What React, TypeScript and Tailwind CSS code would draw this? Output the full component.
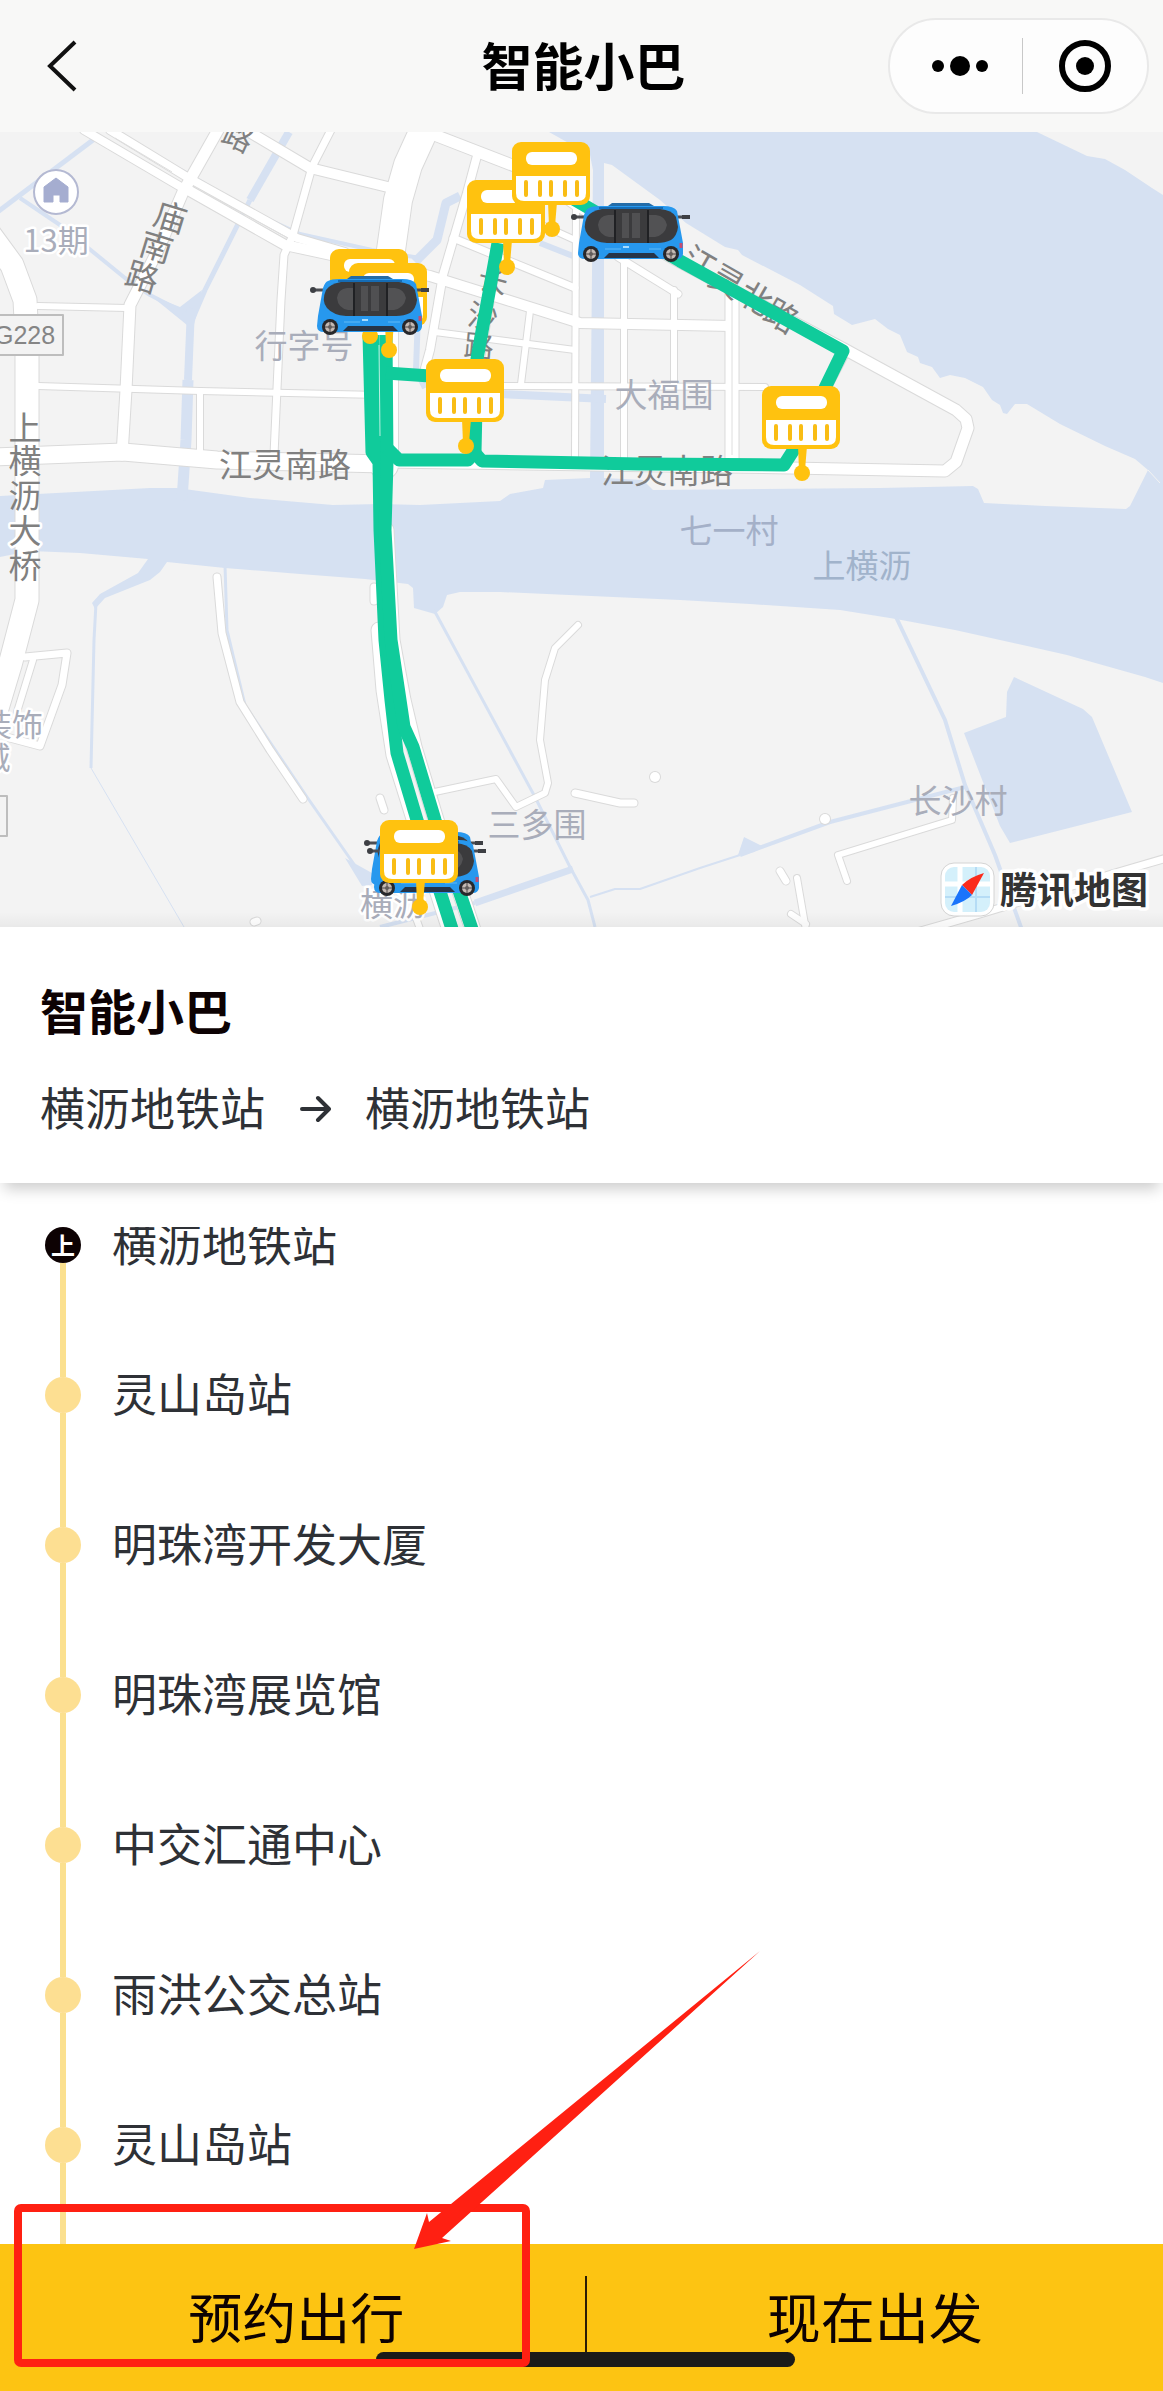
import React, { useState } from "react";

type Road = { d: string; w: number };
type Label = {
	text: string;
	x: number;
	y: number;
	size?: number;
	rotate?: number;
	fill?: string;
	halo?: boolean;
};

const ROAD_TEXT = "#808080";
const PLACE_TEXT = "#a9adba";

const stations = [
	"横沥地铁站",
	"灵山岛站",
	"明珠湾开发大厦",
	"明珠湾展览馆",
	"中交汇通中心",
	"雨洪公交总站",
	"灵山岛站",
];

const creeks: Road[] = [
	{ d: "M-5 214L93 140", w: 5 },
	{ d: "M20 198L60 225L125 278L150 295L187 314", w: 4 },
	{ d: "M289 132L250 200", w: 8 },
	{ d: "M250 200L205 290L193 318", w: 5 },
	{ d: "M191 308L188 380", w: 8 },
	{ d: "M188 380L186 440L182 500", w: 11 },
	{ d: "M120 137L190 175L250 211L300 234L372 250L420 258", w: 4 },
	{ d: "M460 196L446 203L437 240L415 262", w: 9 },
	{ d: "M419 285L416 370L425 388", w: 6 },
	{ d: "M500 394L606 399", w: 8 },
	{ d: "M540 243L578 258", w: 6 },
	{ d: "M96 603L94 640L91 768", w: 3 },
	{ d: "M91 768L184 927", w: 1 },
	{ d: "M225 565L227 630L245 705L307 797L365 880", w: 3 },
	{ d: "M434 610L535 797L570 867L588 900L595 927", w: 3 },
	{ d: "M590 897L615 889L640 889L700 868L740 855", w: 2 },
	{ d: "M740 855L830 822L965 787", w: 4 },
	{ d: "M475 903L573 869", w: 7 },
	{ d: "M380 927L475 903", w: 4 },
	{ d: "M896 617L945 720L965 785L995 855L1022 930", w: 4 },
];

const roads: Road[] = [
	{ d: "M110 130L187 177L297 238L345 252", w: 8 },
	{ d: "M84 130L181 187", w: 8 },
	{ d: "M188 190L285 245L345 258L430 276L507 300L580 323L732 326", w: 10 },
	{ d: "M218 130L183 192L158 250L130 305L126 390L122 455", w: 11 },
	{ d: "M246 130L310 168L400 190", w: 10 },
	{ d: "M331 130L312 167L293 235L284 255L281 300L274 455", w: 7 },
	{ d: "M-10 235L12 265L25 300L27 340L27 600L10 665L-8 725", w: 23 },
	{ d: "M38 306L127 308", w: 6 },
	{ d: "M38 386L200 391L380 395", w: 6 },
	{ d: "M200 391L200 455", w: 6 },
	{ d: "M-5 457L123 452L217 460L385 464", w: 17 },
	{ d: "M385 462L790 468L945 471L956 462L968 428L966 419L956 410L846 350L680 262L578 206L530 172L432 134", w: 11 },
	{ d: "M846 350L822 396", w: 9 },
	{ d: "M424 130L408 165L398 200L391 250L384 330L384 465", w: 28 },
	{ d: "M478 152L467 193L443 275L430 350L424 372", w: 8 },
	{ d: "M453 238L575 288", w: 7 },
	{ d: "M520 215L575 240", w: 6 },
	{ d: "M576 205L575 458", w: 6 },
	{ d: "M624 258L624 458", w: 6 },
	{ d: "M618 257L678 294", w: 7 },
	{ d: "M674 290L674 386", w: 6 },
	{ d: "M500 386L765 387", w: 6 },
	{ d: "M435 332L575 350", w: 6 },
	{ d: "M530 311L521 384", w: 6 },
	{ d: "M495 270L478 370", w: 8 },
	{ d: "M732 292L732 460", w: 13 },
	{ d: "M25 657L67 653L62 685L40 746L10 738", w: 7 },
	{ d: "M33 660L17 712", w: 6 },
	{ d: "M217 577L222 633L240 702L270 750L303 799", w: 7 },
	{ d: "M430 793L496 779L516 807L545 793L548 783L540 740L545 680L555 648L578 625", w: 6 },
	{ d: "M575 793L620 803L634 803", w: 7 },
	{ d: "M655 777L655 777", w: 10 },
	{ d: "M380 798L384 810", w: 7 },
	{ d: "M374 587L374 601", w: 7 },
	{ d: "M254 922L257 921", w: 7 },
	{ d: "M379 630L384 690L394 755L415 822L450 930", w: 15 },
	{ d: "M386 530L392 640L403 700L414 747L436 820L473 930", w: 15 },
	{ d: "M416 918L424 940", w: 6 },
	{ d: "M847 881L838 855L952 820L953 798", w: 6 },
	{ d: "M825 819L825 819", w: 10 },
	{ d: "M780 871L786 881", w: 7 },
	{ d: "M797 878L806 930", w: 6 },
	{ d: "M791 914L806 924", w: 6 },
	{ d: "M910 934L980 914L1115 873L1170 857", w: 7 },
];

const routes = [
	"M369 335L372 452L379 462L380 530L385 640L391 700L397 753L417 820L453 932",
	"M373 335L375 452L385 462",
	"M386 335L387 462L385 530L391 640L400 700L404 727L413 747L435 820L473 932",
	"M386 373L430 376",
	"M387 448L399 460L468 460L475 452L477 359L498 243",
	"M474 452L482 461L640 464L784 465L800 440",
	"M824 390L843 351L680 261L551 186",
];

const labels: Label[] = [
	{ text: "13期", x: 56, y: 252, size: 31, fill: PLACE_TEXT, halo: true },
	{ text: "路", x: 238, y: 148, size: 30, rotate: 25 },
	{ text: "庙", x: 170, y: 229, size: 33, rotate: 17 },
	{ text: "南", x: 156, y: 259, size: 33, rotate: 17 },
	{ text: "路", x: 142, y: 289, size: 33, rotate: 17 },
	{ text: "上", x: 25, y: 440, size: 33 },
	{ text: "横", x: 25, y: 473, size: 33 },
	{ text: "沥", x: 25, y: 508, size: 33 },
	{ text: "大", x: 25, y: 543, size: 33, halo: true },
	{ text: "桥", x: 25, y: 578, size: 33 },
	{ text: "行字号", x: 304, y: 358, fill: PLACE_TEXT },
	{ text: "江灵南路", x: 285, y: 477 },
	{ text: "江灵南路", x: 667, y: 483 },
	{ text: "长", x: 493, y: 291, size: 30, rotate: 15 },
	{ text: "沙", x: 483, y: 327, size: 30, rotate: 10 },
	{ text: "路", x: 479, y: 357, size: 30, rotate: 5 },
	{ text: "江", x: 699, y: 275, size: 33, rotate: 30 },
	{ text: "灵", x: 726, y: 293, size: 33, rotate: 30 },
	{ text: "北", x: 755, y: 310, size: 33, rotate: 30 },
	{ text: "路", x: 781, y: 328, size: 33, rotate: 30 },
	{ text: "大福围", x: 664, y: 407, fill: PLACE_TEXT },
	{ text: "七一村", x: 729, y: 543, fill: "#a4b0c8" },
	{ text: "上横沥", x: 862, y: 578, fill: "#a1b3cb" },
	{ text: "三多围", x: 537, y: 837, fill: PLACE_TEXT },
	{ text: "长沙村", x: 958, y: 813, fill: PLACE_TEXT },
	{ text: "横沥", x: 393, y: 916, fill: PLACE_TEXT, halo: true },
	{ text: "装饰", x: 12, y: 736, size: 31, fill: PLACE_TEXT, halo: true },
	{ text: "城", x: -5, y: 769, size: 31, fill: PLACE_TEXT, halo: true },
];

const StopSign: React.FC<{ x: number; y: number }> = ({ x, y }) => (
	<g transform={`translate(${x} ${y})`}>
		<path d="M36 60H45L43 84H37Z" fill="#ffc20f" />
		<circle cx="40" cy="87" r="8" fill="#ffc20f" />
		<rect width="78" height="63" rx="9" fill="#ffc20f" />
		<rect x="14" y="10" width="51" height="13" rx="6" fill="#fff" />
		<path d="M4 34H74V51Q74 59 66 59H12Q4 59 4 51Z" fill="#fff" />
		<path
			d="M14 40V53M28 40V53M39 40V53M53 40V53M65 40V53"
			stroke="#f9bd14"
			strokeWidth="4"
			strokeLinecap="round"
		/>
	</g>
);

const Bus: React.FC<{ x: number; y: number }> = ({ x, y }) => (
	<g transform={`translate(${x} ${y})`}>
		<path d="M3 14H16M104 14H118" stroke="#4b4d52" strokeWidth="3" />
		<circle cx="3" cy="14" r="3" fill="#3d3f44" />
		<path d="M111 14H119" stroke="#3d3f44" strokeWidth="4" />
		<path d="M18 5Q21 3 30 3H92Q103 3 106 8L112 40L112 51Q111 56 106 56H14Q7 56 7 50L8 40L13 12Q15 6 18 5Z" fill="#2798ee" />
		<path d="M37 3L41 0H78L83 3Z" fill="#236ca8" />
		<path d="M28 5H92" stroke="#156cb5" strokeWidth="2" />
		<path d="M16 14Q20 8 31 6H89Q101 7 105 14L107 24Q106 33 100 37Q94 40 86 40H36Q23 39 17 32Q11 25 16 14Z" fill="#3b3b3d" />
		<path d="M44 12V34H38Q28 32 27 22Q28 13 37 12ZM78 12V34H84Q94 32 96 22Q94 13 85 12Z" fill="#525254" />
		<path d="M51 10H58V35H51ZM61 10H69V35H61Z" fill="#505052" />
		<path d="M44 7V40M77 7V40" stroke="#202124" strokeWidth="2" />
		<path d="M34 46H50M78 46H90" stroke="#60baf8" strokeWidth="1" />
		<path d="M52 44H58" stroke="#a7dcff" strokeWidth="2" />
		<path d="M33 55L38 50H83L88 55Z" fill="#263448" />
		<path d="M110 40V45" stroke="#c44d72" strokeWidth="3" />
		{[20, 100].map((cx) => (
			<g key={cx}>
				<circle cx={cx} cy="51" r="8" fill="#28282b" />
				<circle cx={cx} cy="51" r="5" fill="#c3b9b3" />
				<path d={`M${cx - 5} 51H${cx + 5}M${cx} 46V56`} stroke="#4c4746" strokeWidth="1" />
				<circle cx={cx} cy="51" r="2" fill="#635d5b" />
			</g>
		))}
	</g>
);

const RouteMap: React.FC = () => (
	<svg
		className="block w-full shrink-0"
		viewBox="0 132 1163 795"
		role="img"
		aria-label="地图"
		fontFamily="'Noto Sans CJK SC', sans-serif"
		strokeLinejoin="round"
	>
		<defs>
			<linearGradient id="edge" x1="0" y1="0" x2="0" y2="1">
				<stop offset="0" stopColor="#000" stopOpacity="0" />
				<stop offset="1" stopColor="#000" stopOpacity="0.04" />
			</linearGradient>
		</defs>
		<rect y="132" width="1163" height="795" fill="#f3f3f3" />

		{/* rivers and ponds */}
		<g fill="#d6e1f2">
			<path d="M549 132H1037L1087 156L1105 159L1125 170L1152 188L1163 195V683L1145 677L1067 655L955 630L896 619L840 610L750 604L680 600L500 592H460L447 595L443 607L435 614L414 608L413 588L408 584L365 579L300 574L225 568L167 562L160 572L150 580L105 598L95 609L92 603L100 594L138 573L148 559L80 553L30 551L0 557V496L150 488H177L250 498L333 505L380 504L420 505L500 501L510 494L543 488L545 480L590 478L593 170L590 155Z" />
			<path d="M1014 677L1083 709L1092 717L1132 812L1010 843L1000 826L964 733L1006 717L1007 692Z" />
			<path d="M150 295L180 307L202 290L198 310L191 335L187 325Z" />
			<path d="M345 858L372 873V885L362 886Z" />
			<path d="M738 855L744 837L762 846L754 852Z" />
		</g>
		<path
			d="M604 478V163L612 165L660 200L686 223L725 247L738 250L742 255L800 285L833 306L834 314L852 325L875 319L888 329L900 335L907 352L918 357L920 363L932 367L940 378L950 375L965 378L983 387L992 400L1000 405L1003 413L1007 414L1015 404H1027L1060 424L1105 446L1135 459L1148 470L1130 506L1126 509L1045 506L984 503L978 489L973 486L880 488L653 490L643 480Z"
			fill="#f3f3f3"
		/>
		<path d="M1148 470L1160 483" stroke="#f3f3f3" strokeWidth="1" />
		<path d="M1163 174L1153 188" stroke="#f3f3f3" strokeWidth="3" />

		<g fill="none" stroke="#d6e1f2">
			{creeks.map(({ d, w }) => (
				<path key={d} d={d} strokeWidth={w} />
			))}
		</g>
		<g fill="none" stroke="#dadada" strokeLinecap="round">
			{roads.map(({ d, w }) => (
				<path key={d} d={d} strokeWidth={w + 2} />
			))}
		</g>
		<g fill="none" stroke="#fff" strokeLinecap="round">
			{roads.map(({ d, w }) => (
				<path key={d} d={d} strokeWidth={w} />
			))}
		</g>
		<path d="M115 138L172 172M203 192L288 238M732 298V455" stroke="#dedede" strokeWidth="1" />

		{/* road number shields */}
		<rect x="-10" y="315" width="73" height="40" fill="#f3f3f3" stroke="#bdbdbd" strokeWidth="2" />
		<text x="-6" y="344" fontSize="25" fill="#858585" fontFamily="'Liberation Sans', sans-serif">
			G228
		</text>
		<rect x="-10" y="796" width="17" height="40" fill="#f3f3f3" stroke="#bdbdbd" strokeWidth="2" />

		<circle cx="56" cy="192" r="22" fill="#fff" stroke="#b4b9d2" strokeWidth="2" />
		<path d="M44 187L56 178L68 187V202H60V195H53V202H44Z" fill="#a5add0" stroke="#a5add0" />

		{labels.map(({ text, x, y, size = 33, rotate = 0, fill = ROAD_TEXT, halo }) => (
			<text
				key={`${text}-${x}-${y}`}
				x={x}
				y={y}
				fontSize={size}
				fill={fill}
				textAnchor="middle"
				transform={`rotate(${rotate} ${x} ${y - 11})`}
				stroke={halo ? "#fff" : "none"}
				strokeWidth={halo ? 5 : 0}
				paintOrder="stroke"
			>
				{text}
			</text>
		))}

		<g fill="none" stroke="#10cb9b" strokeWidth="13">
			{routes.map((d) => (
				<path key={d} d={d} />
			))}
		</g>
		<path d="M379 345L380 436" stroke="#b9f0e1" strokeWidth="1" />

		<StopSign x={330} y={249} />
		<StopSign x={349} y={263} />
		<StopSign x={467} y={180} />
		<StopSign x={512} y={142} />
		<StopSign x={426} y={359} />
		<StopSign x={762} y={386} />
		<Bus x={310} y={276} />
		<Bus x={571} y={203} />
		<Bus x={364} y={829} />
		<Bus x={367} y={837} />
		<StopSign x={380} y={820} />

		{/* map provider mark */}
		<rect x="941" y="863" width="53" height="53" rx="13" fill="#fff" stroke="#d4d4d4" />
		<rect x="945" y="867" width="45" height="45" rx="9" fill="#d4f0fb" />
		<path d="M960 867V912M945 884H990" stroke="#fff" strokeWidth="5" />
		<path d="M976 867V912M945 897H990" stroke="#b5dcf5" strokeWidth="2" />
		<path d="M984 873L972 895L962 885Q970 877 984 873Z" fill="#fb2b1c" />
		<path d="M951 906L962 885L972 895Q965 902 951 906Z" fill="#1a74fb" />
		<text
			x="1000"
			y="904"
			fontSize="37"
			fontWeight="700"
			fill="#333"
			stroke="#fff"
			strokeWidth="7"
			paintOrder="stroke"
		>
			腾讯地图
		</text>
		<rect y="912" width="1163" height="15" fill="url(#edge)" />
	</svg>
);

const Header: React.FC = () => (
	<header className="grid h-[132px] shrink-0 grid-cols-[1fr_auto_1fr] items-center bg-[#f8f8f7] px-[14px]">
		<button type="button" aria-label="返回" className="ml-6 w-12">
			<svg viewBox="0 0 48 56" className="w-12" fill="none" stroke="#111" strokeWidth="4">
				<path d="M37 4L12 28L37 52" />
			</svg>
		</button>
		<h1 className="pb-1 pl-1 text-[51px] leading-[60px] font-bold text-black">智能小巴</h1>
		<div className="flex h-24 w-[261px] items-center justify-self-end rounded-full border-2 border-[#e9e9e9] bg-[#fdfdfd]">
			<button type="button" aria-label="更多" className="flex flex-1 items-center justify-center gap-[6px] pl-2">
				<span className="size-3 rounded-full bg-black" />
				<span className="size-5 rounded-full bg-black" />
				<span className="size-3 rounded-full bg-black" />
			</button>
			<span className="h-14 w-px bg-[#c8c8c8]" />
			<button type="button" aria-label="关闭" className="flex flex-1 items-center justify-center">
				<span className="flex size-[52px] items-center justify-center rounded-full border-[6px] border-black">
					<span className="size-[18px] rounded-full bg-black" />
				</span>
			</button>
		</div>
	</header>
);

const App: React.FC = () => {
	const [mode, setMode] = useState("book");

	return (
		<main className="flex h-screen flex-col bg-white font-['Noto_Sans_CJK_SC',sans-serif] text-[#2e3136]">
			<Header />
			<RouteMap />

			<section className="flex shrink-0 flex-col gap-10 bg-white px-10 pt-[52px] pb-12 shadow-[0_10px_14px_-4px_rgba(0,0,0,0.2)]">
				<h2 className="text-[48px] leading-[60px] font-bold text-[#0d0203]">智能小巴</h2>
				<div className="flex items-center text-[45px] leading-[56px]">
					<span>横沥地铁站</span>
					<svg viewBox="0 0 32 32" className="mx-[34px] w-8" fill="none" stroke="#2e3136" strokeWidth="4" strokeLinecap="round" strokeLinejoin="round">
						<path d="M3 18H29M19 7L30 18L19 29" />
					</svg>
					<span>横沥地铁站</span>
				</div>
			</section>

			<ol className="mt-11 min-h-0 flex-1 overflow-y-auto pl-[45px] [scrollbar-width:none]">
				{stations.map((name, index) => (
					<li key={index} className="flex h-[150px] gap-[31px]">
						<div className="flex w-9 flex-col items-center">
							{index === 0 ? (
								<span className="flex size-9 items-center justify-center rounded-full bg-[#0d0203] text-[24px] leading-6 font-bold text-white">
									上
								</span>
							) : (
								<span className="size-9 rounded-full bg-[#fddf92]" />
							)}
							<span className="w-[6px] flex-1 bg-[#fbe08f]" />
						</div>
						<span className="text-[45px] leading-8">{name}</span>
					</li>
				))}
			</ol>

			<footer className="relative flex h-[147px] shrink-0 bg-[#fdc412] pl-2 text-[54px] text-[#0d0203]">
				<button type="button" aria-pressed={mode === "book"} onClick={() => setMode("book")} className="flex-1 pb-1">
					预约出行
				</button>
				<span className="mt-8 h-20 w-[2px] bg-[#2b1d05]" />
				<button type="button" aria-pressed={mode === "now"} onClick={() => setMode("now")} className="flex-1 pb-1">
					现在出发
				</button>
				<div className="absolute right-0 bottom-6 left-2 mx-auto h-[15px] w-[36%] rounded-full bg-[#1b1b19]" />
				<svg
					viewBox="0 1941 1163 450"
					className="pointer-events-none absolute bottom-0 left-0 w-full"
					aria-hidden="true"
				>
					<rect x="18" y="2208" width="508" height="155" rx="3" fill="none" stroke="#ff2012" strokeWidth="8" />
					<path d="M760 1951L429 2222L427 2213L414 2249L451 2241L442 2238Z" fill="#ff2012" />
				</svg>
			</footer>
		</main>
	);
};

export default App;
